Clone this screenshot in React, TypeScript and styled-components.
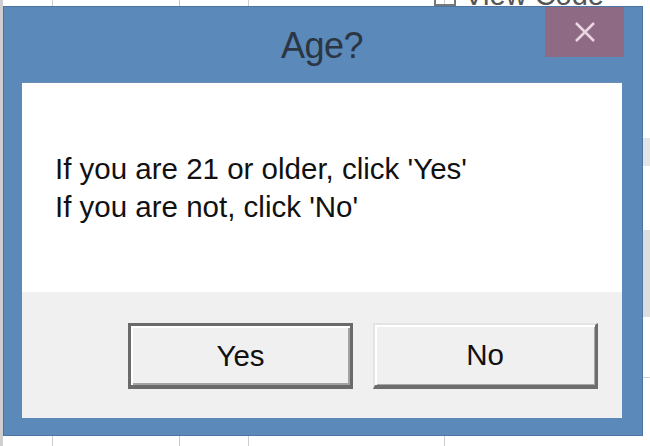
import { createGlobalStyle, styled } from 'styled-components'

const GlobalStyle = createGlobalStyle`
  html, body {
    margin: 0;
    padding: 0;
    background: #ffffff;
  }
  * {
    box-sizing: border-box;
  }
`

const Stage = styled.div`
  display: grid;
  width: 650px;
  height: 446px;
  overflow: hidden;
  background:
    linear-gradient(to right, #cfcfcf 0 3px, transparent 3px),
    linear-gradient(to right, transparent 52px, #cdcdcd 52px 53px, transparent 53px),
    linear-gradient(to right, transparent 248px, #cdcdcd 248px 249px, transparent 249px),
    linear-gradient(to right, transparent 444px, #cdcdcd 444px 445px, transparent 445px),
    linear-gradient(to right, transparent 179px, #c8c8c8 179px 180px, transparent 180px),
    linear-gradient(to bottom, transparent 138px, #e6e6e6 138px 166px, transparent 166px,
      transparent 230px, #dedede 230px 317px, transparent 317px,
      transparent 377px, #d4d4d4 377px 378px, transparent 378px),
    #ffffff;
`

const Backdrop = styled.div`
  grid-area: 1 / 1;
  display: flex;
  justify-content: flex-end;
  padding-right: 46px;
`

const BackdropLabel = styled.div`
  display: flex;
  align-items: center;
  gap: 8px;
  margin-top: -17px;
  height: 24px;
  font-family: 'Liberation Sans', Arial, sans-serif;
  font-size: 29px;
  color: #555555;
  span.box {
    width: 22px;
    height: 22px;
    border: 2px solid #777777;
  }
`

const Window = styled.div`
  grid-area: 1 / 1;
  display: flex;
  flex-direction: column;
  margin: 6px 7px 10px 3px;
  background: #5a89ba;
  border: 1px solid #4a74a2;
  padding: 0 20px 17px 18px;
`

const TitleBar = styled.div`
  display: grid;
  grid-template-columns: 1fr auto 1fr;
  height: 75px;
`

const Title = styled.div`
  grid-column: 2;
  align-self: center;
  margin-top: 2px;
  font-family: 'Liberation Sans', Arial, sans-serif;
  font-size: 36px;
  color: #2c3542;
  letter-spacing: -0.5px;
`

const CloseButton = styled.div`
  grid-column: 3;
  justify-self: end;
  align-self: start;
  margin-right: -2px;
  display: flex;
  align-items: center;
  justify-content: center;
  width: 79px;
  height: 50px;
  background: #8f6a85;
`

const Client = styled.div`
  display: flex;
  flex-direction: column;
  height: 336px;
  border: 1px solid #6b8fb6;
  border-width: 1px 0 0 0;
`

const Message = styled.div`
  height: 209px;
  background: #ffffff;
  padding: 67px 0 0 33px;
  font-family: 'Liberation Sans', Arial, sans-serif;
  font-size: 29.5px;
  line-height: 38px;
  color: #111111;
`

const ButtonRow = styled.div`
  flex: 1;
  display: flex;
  justify-content: flex-end;
  align-items: flex-start;
  gap: 20px;
  padding: 31px 24px 0 0;
  background: #f0f0f0;
`

const DialogButton = styled.div<{ $default?: boolean }>`
  display: flex;
  align-items: center;
  justify-content: center;
  width: 225px;
  height: 66px;
  background: #f0f0f0;
  font-family: 'Liberation Sans', Arial, sans-serif;
  font-size: 29.5px;
  color: #111111;
  border-style: solid;
  ${({ $default }) =>
    $default
      ? `
    border-width: 3px 3px 4px 3px;
    border-color: #6a6a6a;
    box-shadow: inset 2px 2px 0 #ffffff, inset -2px -2px 0 #a3a3a3;
  `
      : `
    border-width: 2px 3px 4px 2px;
    border-color: #e4e4e4 #6d6d6d #6d6d6d #e4e4e4;
    box-shadow: inset 2px 2px 0 #ffffff, inset -1px -1px 0 #a8a8a8;
  `}
`

const CloseIcon = () => (
  <svg width='22' height='20' viewBox='0 0 22 20'>
    <path d='M2 1 L20 19 M20 1 L2 19' stroke='#ead6e2' strokeWidth='2.6' fill='none' />
  </svg>
)

export default function App() {
  return (
    <>
      <GlobalStyle />
      <Stage>
        <Backdrop>
          <BackdropLabel>
            <span className='box'></span>
            <span>View Code</span>
          </BackdropLabel>
        </Backdrop>
        <Window>
          <TitleBar>
            <Title>Age?</Title>
            <CloseButton>
              <CloseIcon />
            </CloseButton>
          </TitleBar>
          <Client>
            <Message>
              If you are 21 or older, click 'Yes'
              <br />
              If you are not, click 'No'
            </Message>
            <ButtonRow>
              <DialogButton $default>Yes</DialogButton>
              <DialogButton>No</DialogButton>
            </ButtonRow>
          </Client>
        </Window>
      </Stage>
    </>
  )
}
